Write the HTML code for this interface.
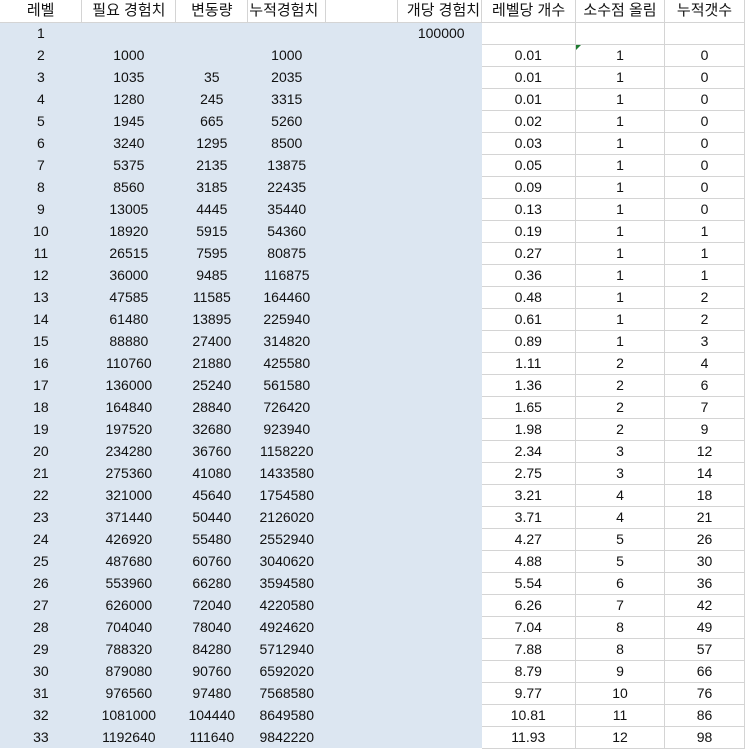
<!DOCTYPE html>
<html><head><meta charset="utf-8"><style>
body{margin:0;background:#fff;width:745px;height:748px;overflow:hidden;font-family:"Liberation Sans","Noto Sans CJK KR",sans-serif;font-size:14px;color:#111;}
table{border-collapse:collapse;table-layout:fixed;position:absolute;left:0;top:0;}
td{height:22px;padding:0;text-align:center;white-space:nowrap;line-height:21px;box-sizing:border-box;overflow:visible;}
tr{height:22px;}
tr.h td{background:#fff;border-right:1px solid #d4d4d4;border-bottom:1px solid #d4d4d4;font-size:15px;}
td.b{background:#dce6f1;}
td.w{border-right:1px solid #d4d4d4;border-bottom:1px solid #d4d4d4;}
</style></head><body>
<table>
<colgroup><col style="width:82px"><col style="width:94px"><col style="width:72px"><col style="width:78px"><col style="width:72px"><col style="width:84px"><col style="width:94px"><col style="width:89px"><col style="width:80px"></colgroup>
<tr class="h"><td>레벨</td><td>필요 경험치</td><td>변동량</td><td style="text-align:left;padding-left:1px">누적경험치</td><td></td><td style="text-align:right;padding-right:1px">개당 경험치</td><td>레벨당 개수</td><td>소수점 올림</td><td>누적갯수</td></tr>
<tr><td class="b">1</td><td class="b"></td><td class="b"></td><td class="b"></td><td class="b" colspan="2" style="text-align:right;padding-right:17px">100000</td><td class="w"></td><td class="w"></td><td class="w"></td></tr>
<tr><td class="b">2</td><td class="b">1000</td><td class="b"></td><td class="b">1000</td><td class="b" colspan="2"></td><td class="w">0.01</td><td class="w" style="position:relative"><span style="position:absolute;left:0;top:0;width:0;height:0;border-top:5px solid #1e7b30;border-right:5px solid transparent"></span>1</td><td class="w">0</td></tr>
<tr><td class="b">3</td><td class="b">1035</td><td class="b">35</td><td class="b">2035</td><td class="b" colspan="2"></td><td class="w">0.01</td><td class="w">1</td><td class="w">0</td></tr>
<tr><td class="b">4</td><td class="b">1280</td><td class="b">245</td><td class="b">3315</td><td class="b" colspan="2"></td><td class="w">0.01</td><td class="w">1</td><td class="w">0</td></tr>
<tr><td class="b">5</td><td class="b">1945</td><td class="b">665</td><td class="b">5260</td><td class="b" colspan="2"></td><td class="w">0.02</td><td class="w">1</td><td class="w">0</td></tr>
<tr><td class="b">6</td><td class="b">3240</td><td class="b">1295</td><td class="b">8500</td><td class="b" colspan="2"></td><td class="w">0.03</td><td class="w">1</td><td class="w">0</td></tr>
<tr><td class="b">7</td><td class="b">5375</td><td class="b">2135</td><td class="b">13875</td><td class="b" colspan="2"></td><td class="w">0.05</td><td class="w">1</td><td class="w">0</td></tr>
<tr><td class="b">8</td><td class="b">8560</td><td class="b">3185</td><td class="b">22435</td><td class="b" colspan="2"></td><td class="w">0.09</td><td class="w">1</td><td class="w">0</td></tr>
<tr><td class="b">9</td><td class="b">13005</td><td class="b">4445</td><td class="b">35440</td><td class="b" colspan="2"></td><td class="w">0.13</td><td class="w">1</td><td class="w">0</td></tr>
<tr><td class="b">10</td><td class="b">18920</td><td class="b">5915</td><td class="b">54360</td><td class="b" colspan="2"></td><td class="w">0.19</td><td class="w">1</td><td class="w">1</td></tr>
<tr><td class="b">11</td><td class="b">26515</td><td class="b">7595</td><td class="b">80875</td><td class="b" colspan="2"></td><td class="w">0.27</td><td class="w">1</td><td class="w">1</td></tr>
<tr><td class="b">12</td><td class="b">36000</td><td class="b">9485</td><td class="b">116875</td><td class="b" colspan="2"></td><td class="w">0.36</td><td class="w">1</td><td class="w">1</td></tr>
<tr><td class="b">13</td><td class="b">47585</td><td class="b">11585</td><td class="b">164460</td><td class="b" colspan="2"></td><td class="w">0.48</td><td class="w">1</td><td class="w">2</td></tr>
<tr><td class="b">14</td><td class="b">61480</td><td class="b">13895</td><td class="b">225940</td><td class="b" colspan="2"></td><td class="w">0.61</td><td class="w">1</td><td class="w">2</td></tr>
<tr><td class="b">15</td><td class="b">88880</td><td class="b">27400</td><td class="b">314820</td><td class="b" colspan="2"></td><td class="w">0.89</td><td class="w">1</td><td class="w">3</td></tr>
<tr><td class="b">16</td><td class="b">110760</td><td class="b">21880</td><td class="b">425580</td><td class="b" colspan="2"></td><td class="w">1.11</td><td class="w">2</td><td class="w">4</td></tr>
<tr><td class="b">17</td><td class="b">136000</td><td class="b">25240</td><td class="b">561580</td><td class="b" colspan="2"></td><td class="w">1.36</td><td class="w">2</td><td class="w">6</td></tr>
<tr><td class="b">18</td><td class="b">164840</td><td class="b">28840</td><td class="b">726420</td><td class="b" colspan="2"></td><td class="w">1.65</td><td class="w">2</td><td class="w">7</td></tr>
<tr><td class="b">19</td><td class="b">197520</td><td class="b">32680</td><td class="b">923940</td><td class="b" colspan="2"></td><td class="w">1.98</td><td class="w">2</td><td class="w">9</td></tr>
<tr><td class="b">20</td><td class="b">234280</td><td class="b">36760</td><td class="b">1158220</td><td class="b" colspan="2"></td><td class="w">2.34</td><td class="w">3</td><td class="w">12</td></tr>
<tr><td class="b">21</td><td class="b">275360</td><td class="b">41080</td><td class="b">1433580</td><td class="b" colspan="2"></td><td class="w">2.75</td><td class="w">3</td><td class="w">14</td></tr>
<tr><td class="b">22</td><td class="b">321000</td><td class="b">45640</td><td class="b">1754580</td><td class="b" colspan="2"></td><td class="w">3.21</td><td class="w">4</td><td class="w">18</td></tr>
<tr><td class="b">23</td><td class="b">371440</td><td class="b">50440</td><td class="b">2126020</td><td class="b" colspan="2"></td><td class="w">3.71</td><td class="w">4</td><td class="w">21</td></tr>
<tr><td class="b">24</td><td class="b">426920</td><td class="b">55480</td><td class="b">2552940</td><td class="b" colspan="2"></td><td class="w">4.27</td><td class="w">5</td><td class="w">26</td></tr>
<tr><td class="b">25</td><td class="b">487680</td><td class="b">60760</td><td class="b">3040620</td><td class="b" colspan="2"></td><td class="w">4.88</td><td class="w">5</td><td class="w">30</td></tr>
<tr><td class="b">26</td><td class="b">553960</td><td class="b">66280</td><td class="b">3594580</td><td class="b" colspan="2"></td><td class="w">5.54</td><td class="w">6</td><td class="w">36</td></tr>
<tr><td class="b">27</td><td class="b">626000</td><td class="b">72040</td><td class="b">4220580</td><td class="b" colspan="2"></td><td class="w">6.26</td><td class="w">7</td><td class="w">42</td></tr>
<tr><td class="b">28</td><td class="b">704040</td><td class="b">78040</td><td class="b">4924620</td><td class="b" colspan="2"></td><td class="w">7.04</td><td class="w">8</td><td class="w">49</td></tr>
<tr><td class="b">29</td><td class="b">788320</td><td class="b">84280</td><td class="b">5712940</td><td class="b" colspan="2"></td><td class="w">7.88</td><td class="w">8</td><td class="w">57</td></tr>
<tr><td class="b">30</td><td class="b">879080</td><td class="b">90760</td><td class="b">6592020</td><td class="b" colspan="2"></td><td class="w">8.79</td><td class="w">9</td><td class="w">66</td></tr>
<tr><td class="b">31</td><td class="b">976560</td><td class="b">97480</td><td class="b">7568580</td><td class="b" colspan="2"></td><td class="w">9.77</td><td class="w">10</td><td class="w">76</td></tr>
<tr><td class="b">32</td><td class="b">1081000</td><td class="b">104440</td><td class="b">8649580</td><td class="b" colspan="2"></td><td class="w">10.81</td><td class="w">11</td><td class="w">86</td></tr>
<tr><td class="b">33</td><td class="b">1192640</td><td class="b">111640</td><td class="b">9842220</td><td class="b" colspan="2"></td><td class="w">11.93</td><td class="w">12</td><td class="w">98</td></tr>
</table>
</body></html>
